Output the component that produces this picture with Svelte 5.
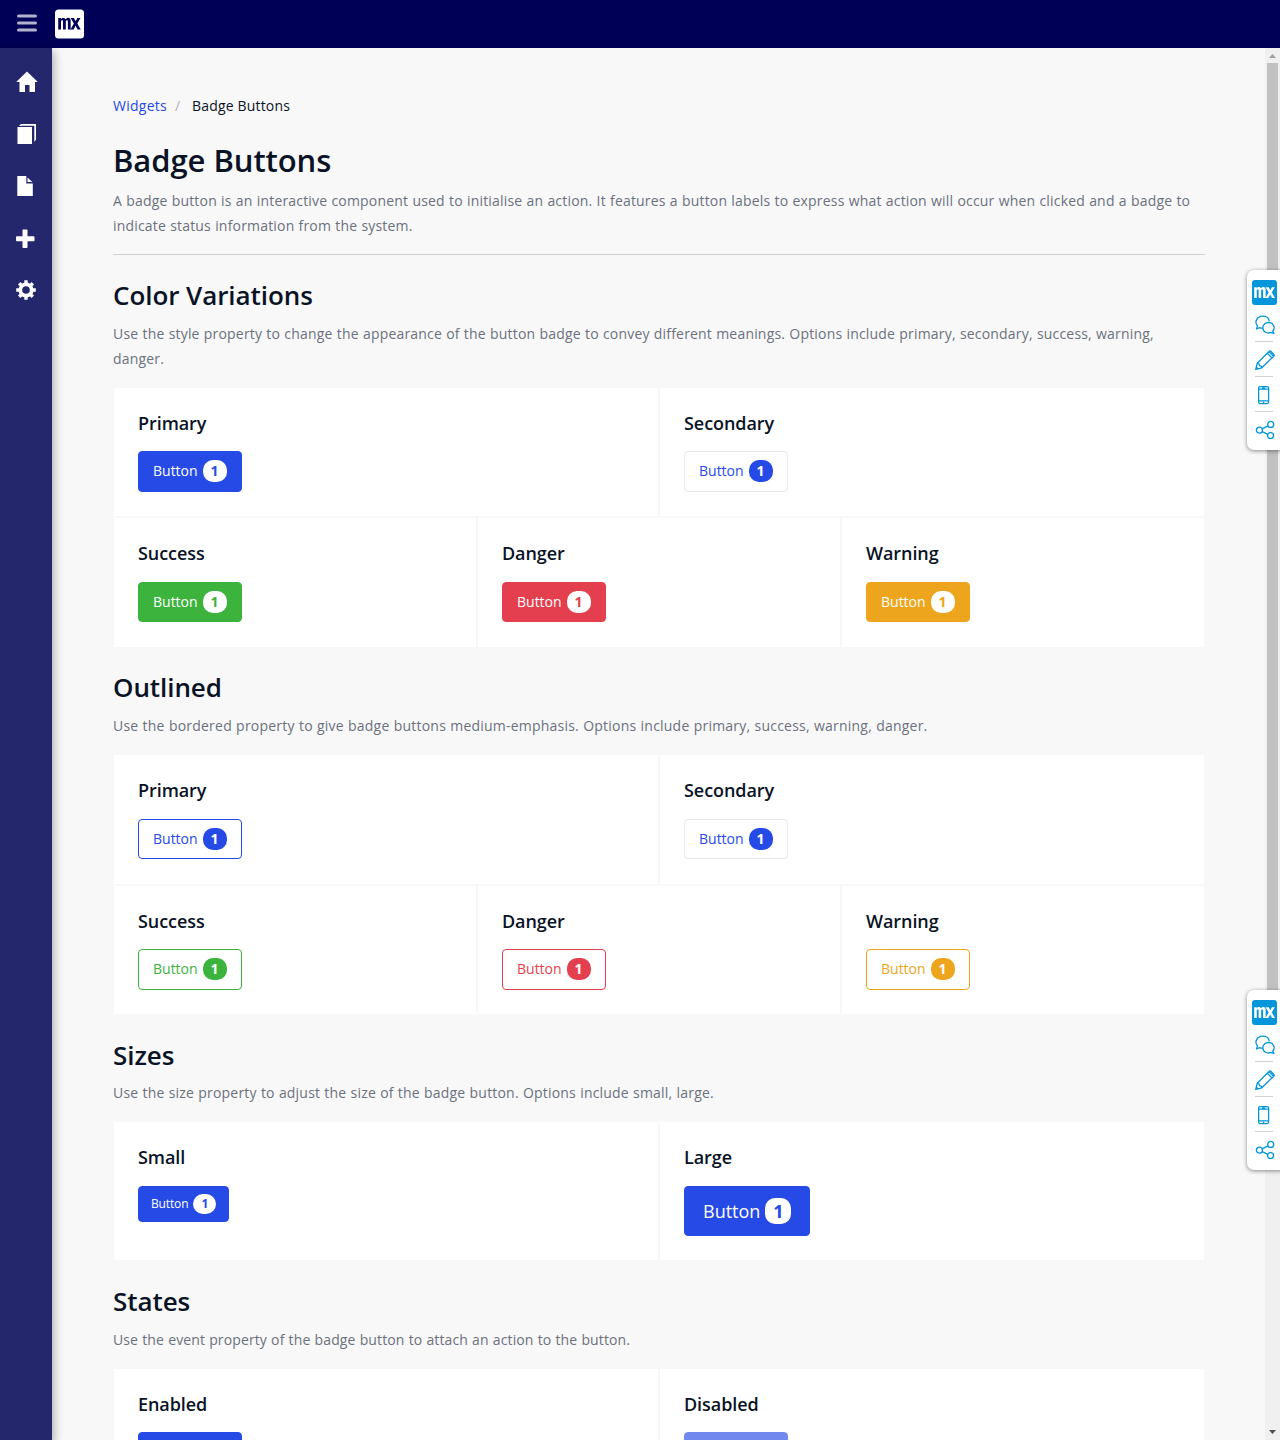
<script>
  const variants = [
    [['Primary', 'primary'], ['Secondary', 'secondary']],
    [['Success', 'success'], ['Danger', 'danger'], ['Warning', 'warning']]
  ];
  const outlined = variants.map((row) => row.map(([t, c]) => [t, c + ' bordered']));
  const sections = [
    {
      title: 'Color Variations',
      text: 'Use the style property to change the appearance of the button badge to convey different meanings. Options include primary, secondary, success, warning, danger.',
      tracking: 0.186,
      rows: variants
    },
    {
      title: 'Outlined',
      text: 'Use the bordered property to give badge buttons medium-emphasis. Options include primary, success, warning, danger.',
      tracking: 0.216,
      rows: outlined
    },
    {
      title: 'Sizes',
      text: 'Use the size property to adjust the size of the badge button. Options include small, large.',
      tracking: 0.193,
      rows: [[['Small', 'primary small'], ['Large', 'primary large']]]
    },
    {
      title: 'States',
      text: 'Use the event property of the badge button to attach an action to the button.',
      tracking: 0.122,
      rows: [[['Enabled', 'primary'], ['Disabled', 'primary disabled']]]
    }
  ];
</script>

{#snippet mx()}
  <path d="M2 18V6h3v1.200C6 5.600 9 5.300 10 7.400c1.500-2.400 5.500-2.200 5.500 1.200V18h-3V9.800c0-2-2.300-1.500-2.300.2v8h-3v-8.200c0-2-2.200-1.500-2.200.2v8zM15.500 6H19l2 3.500L22.800 6h3.400l-3.500 5.800L26.500 18H23l-2.200-3.800-2.100 3.800h-3.400l3.700-6.200z" />
{/snippet}

<div class="app">
  <header>
    <svg class="menu" width="20" height="18" viewBox="0 0 20 18" stroke="#b3b3cd" stroke-width="3" stroke-linecap="round">
      <path d="M1.500 2h17M1.500 9h17M1.500 16h17" />
    </svg>
    <svg width="29" height="30" viewBox="0 0 29 30">
      <rect y=".5" width="29" height="29" rx="3.500" fill="#fff" />
      <g fill="#000056" transform="translate(1.400 3.200) scale(.92 .96)">{@render mx()}</g>
    </svg>
  </header>

  <div class="body">
    <nav>
      <svg viewBox="0 0 22 22" fill="#fff"><path d="M11 .500 21.800 11H19v10h-5.500v-7h-4.500v7H3.500V11H.2z" /></svg>
      <svg viewBox="0 0 22 22" fill="#fff"><path d="M1.500 4H16v17H1.500zM3 3l2-2h15v15.500L18.300 19V2.800H5V3z" /></svg>
      <svg viewBox="0 0 22 22" fill="#fff"><path d="M1.300 1h9v7.500h6.500V21H1.300zM11.500 2.500l4.800 4.500h-4.800z" /></svg>
      <svg class="plus" viewBox="0 0 22 22" fill="#fff"><path d="M7.300 1.500h3.400q.8 0 .8.800v5.900h6q1 0 1 .8v3.300q0 .9-1 .9h-6v6q0 .8-.8.800H7.300q-.8 0-.8-.8v-6H1q-1 0-1-.9V9q0-.8 1-.8h5.500V2.300q0-.8.8-.8z" /></svg>
      <svg viewBox="0 0 22 22" fill="none" stroke="#fff">
        <circle cx="10" cy="11" r="5.700" stroke-width="3.800" />
        <path d="M10 1.200v3M10 17.800v3M.2 11h3M16.800 11h3M3.200 4.200l2 2M14.800 15.800l2 2M3.200 17.800l2-2M14.800 6.200l2-2" stroke-width="3.400" />
      </svg>
    </nav>

    <main>
      <div class="crumbs"><a href="#widgets">Widgets</a><i>/</i><span>Badge Buttons</span></div>
      <h1>Badge Buttons</h1>
      <p class="intro">A badge button is an interactive component used to initialise an action. It features a button labels to express what action will occur when clicked and a badge to indicate status information from the system.</p>
      {#each sections as s}
        <section>
          <h2>{s.title}</h2>
          <p style:letter-spacing="{s.tracking}px">{s.text}</p>
          {#each s.rows as row}
            <div class="row">
              {#each row as [title, cls]}
                <div class="card">
                  <h3>{title}</h3>
                  <button class={cls}>Button<b>1</b></button>
                </div>
              {/each}
            </div>
          {/each}
        </section>
      {/each}
    </main>

    <div class="scroll">
      <svg width="7" height="4" viewBox="0 0 7 4"><path d="M3.500 0 7 4H0z" fill="#a0a0a0" /></svg>
      <div class="thumb"></div>
      <svg width="7" height="4" viewBox="0 0 7 4"><path d="M0 0h7L3.500 4z" fill="#505050" /></svg>
    </div>
  </div>

  {#each ['upper', 'lower'] as place}
    <aside class={place}>
      <svg class="logo" width="25" height="25" viewBox="0 0 25 25">
        <rect width="25" height="25" rx="3" fill="#0595db" />
        <g fill="#fff" transform="translate(.5 1.800) scale(.85 .9)">{@render mx()}</g>
      </svg>
      <div class="tool">
        <svg viewBox="0 0 20 20"><path d="M7.500 13.200q-1.700 0-2.800-.6L1.500 14l1-3C-1 7 2 1.200 7.800 1.200c3.400 0 6 2 6.500 5M17.700 16.200c3-3.200 1-8.700-4-8.700-3.300 0-5.900 2.300-5.900 5.300 0 4.200 4.500 6.200 7.900 4.600l3.200 1.100z" /></svg>
      </div>
      <div class="tool">
        <svg viewBox="0 0 20 20"><path d="m.7 19.300 1.500-6L14 1.500q1-1 2 0l2.700 2.700q1 1 0 2L6.800 17.800zM2.200 13.300l1.800.5.500 1.800 1.800.5.500 1.700M12.300 3.200l4.700 4.700M14 1.700l4.500 4.500M.7 19.300l1.800-1.900" /></svg>
      </div>
      <div class="tool">
        <svg viewBox="0 0 20 20"><rect x="3.600" y="1.600" width="10" height="17" rx="1.500" /><path d="M3.600 4.200h10M3.600 15.800h10M7 2.800h3.200M8 17.300h1.200" /></svg>
      </div>
      <div class="tool">
        <svg viewBox="0 0 20 20"><circle cx="4.400" cy="10.200" r="3" /><circle cx="15.700" cy="4.400" r="3" /><circle cx="15.600" cy="15.600" r="3" /><path d="m7.100 8.800 5.900-3M7.100 11.600l5.800 2.700" /></svg>
      </div>
    </aside>
  {/each}
</div>

<style>
  :global(body) { margin: 0; }
  .app {
    position: relative;
    height: 1440px;
    overflow: hidden;
    display: flex;
    flex-direction: column;
    background: #f8f8f8;
    font: 14px/25px 'Open Sans', sans-serif;
    color: #6c717e;
  }
  header {
    flex: none;
    box-sizing: border-box;
    height: 48px;
    padding: 0 17px;
    display: flex;
    align-items: center;
    gap: 18px;
    background: #000056;
  }
  .menu { margin-top: -2px; }
  .body { flex: 1; min-height: 0; display: flex; }
  nav {
    flex: none;
    box-sizing: border-box;
    width: 52px;
    padding: 23px 0 0 16px;
    display: flex;
    flex-direction: column;
    gap: 30px;
    background: #24276c;
    box-shadow: 0 4px 10px 1px rgba(0, 0, 0, .36);
  }
  nav svg { width: 22px; height: 22px; display: block; }
  nav .plus { margin: 1px 0 -1px; }
  main { flex: 1; min-width: 0; padding: 45px 60px 0 61px; overflow: hidden; }
  .scroll {
    flex: none;
    width: 15px;
    box-sizing: border-box;
    padding: 6px 0;
    display: flex;
    flex-direction: column;
    align-items: center;
    background: #f0f0f0;
  }
  .scroll svg { flex: none; }
  .thumb { width: 11px; height: 1058px; margin: 5px 0 auto; background: #c1c1c1; }

  .crumbs { display: flex; color: #0a1326; letter-spacing: .17px; }
  .crumbs a { width: 54px; color: #264ae5; text-decoration: none; letter-spacing: .25px; }
  .crumbs i { width: 17px; padding-left: 8px; color: #b0b2b9; font-style: normal; }
  h1, h2, h3, p { margin: 0; }
  h1, h2, h3 { color: #0a1326; font-weight: 600; letter-spacing: -.07px; }
  h1 { margin-top: 22px; font-size: 31px; line-height: 40px; }
  p { word-spacing: .36px; }
  .intro { padding: 8px 0 16px; border-bottom: 1px solid #ced0d3; letter-spacing: .182px; }
  section { padding-top: 23px; }
  section + section { padding-top: 22.700px; }
  h2 { font-size: 26px; line-height: 34px; }
  section p { padding: 8.700px 0 16px; }
  .row { display: flex; }
  .card {
    flex: 1 1 0;
    min-width: 0;
    padding: 24px 24px 24.500px;
    border: 1px solid #f8f8f8;
    background: #fff;
  }
  h3 { margin-bottom: 16px; font-size: 18px; line-height: 23.600px; }

  button {
    box-sizing: border-box;
    height: 40.400px;
    padding: 0 14px;
    display: flex;
    align-items: center;
    gap: 5px;
    border: 1px solid var(--c);
    border-radius: 4px;
    background: var(--c);
    color: #fff;
    font: 14px/20px 'Open Sans', sans-serif;
  }
  b {
    box-sizing: border-box;
    min-width: 24px;
    height: 22px;
    border-radius: 10px;
    background: #fff;
    color: var(--c);
    line-height: 22px;
    text-align: center;
  }
  .primary, .secondary { --c: #264ae5; }
  .success { --c: #3cb33d; }
  .danger { --c: #e33f4e; }
  .warning { --c: #eca51c; }
  .bordered, .secondary { background: #fff; color: var(--c); }
  .bordered b, .secondary b { background: var(--c); color: #fff; }
  .secondary { border-color: #e7e7e9; }
  .small { height: 36px; padding: 0 12px; font-size: 12px; letter-spacing: -.15px; }
  .small b { min-width: 23px; height: 20px; line-height: 20px; }
  .large { height: 50px; padding: 0 18px; font-size: 18px; }
  .large b { min-width: 26px; height: 26px; line-height: 26px; }
  .disabled { opacity: .65; }

  aside {
    position: absolute;
    left: 1247px;
    box-sizing: border-box;
    width: 40px;
    height: 180px;
    padding: 10px 0 0 5px;
    border-radius: 7px;
    background: #fff;
    box-shadow: 0 1px 4px rgba(0, 0, 0, .45);
  }
  .upper { top: 270px; }
  .lower { top: 990px; }
  .logo { display: block; }
  .tool {
    box-sizing: border-box;
    width: 18px;
    height: 35px;
    margin-left: 3px;
    padding-top: 8px;
    border-bottom: 1px solid #d0d2d4;
  }
  .tool:nth-child(2) { height: 37px; padding-top: 10px; }
  .tool:last-child { border: 0; }
  .tool svg {
    display: block;
    width: 20px;
    height: 20px;
    fill: none;
    stroke: #0595db;
    stroke-width: 1.300;
    stroke-linejoin: round;
  }
</style>
